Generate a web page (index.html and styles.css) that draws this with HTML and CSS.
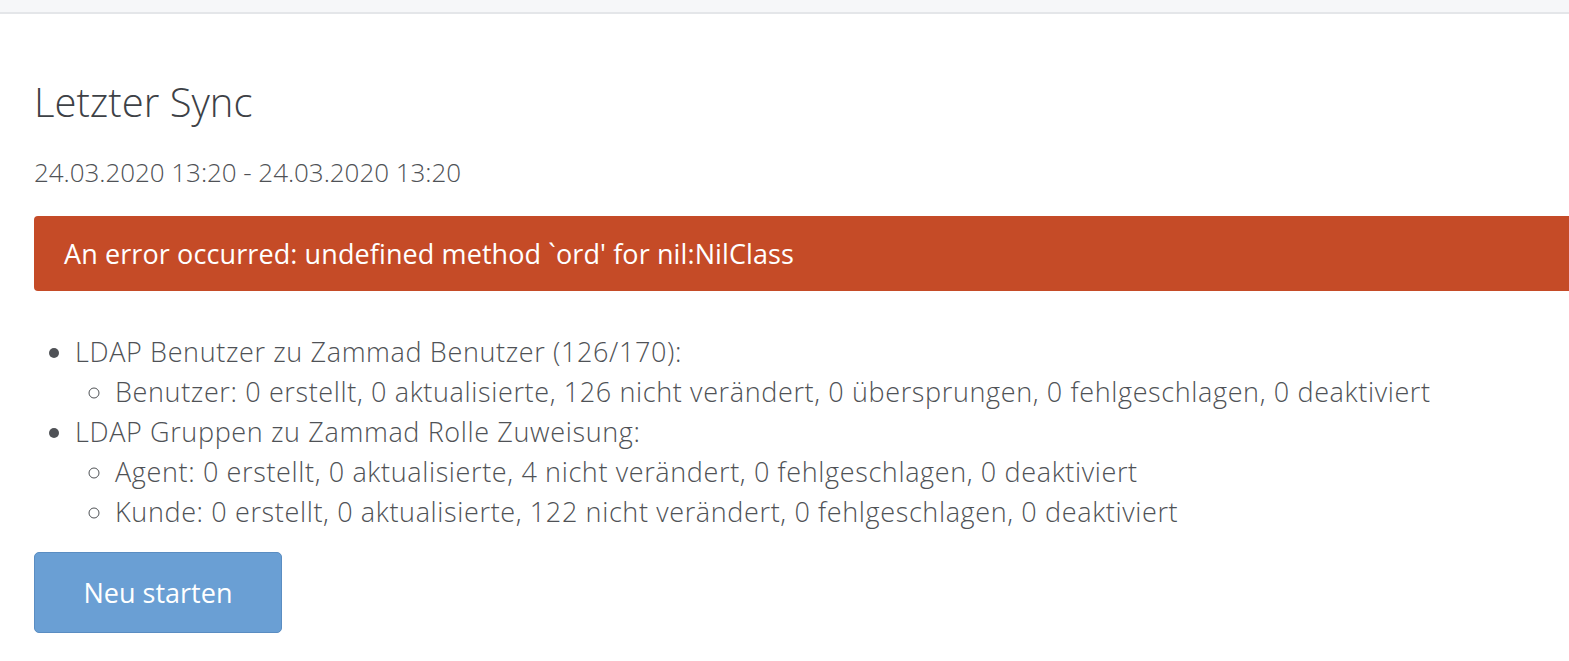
FILE: index.html
```html
<!DOCTYPE html>
<html lang="de">
<head>
<meta charset="utf-8">
<title>Letzter Sync</title>
<link rel="stylesheet" href="styles.css">
</head>
<body>
<div class="topbar"></div>
<main class="content">
  <h2 class="title">Letzter Sync</h2>
  <p class="range">24.03.2020 13:20 - 24.03.2020 13:20</p>
  <div class="alert">An error occurred: undefined method `ord' for nil:NilClass</div>
  <ul class="summary">
    <li>LDAP Benutzer zu Zammad Benutzer (126/170):
      <ul>
        <li>Benutzer: 0 erstellt, 0 aktualisierte, 126 nicht verändert, 0 übersprungen, 0 fehlgeschlagen, 0 deaktiviert</li>
      </ul>
    </li>
    <li>LDAP Gruppen zu Zammad Rolle Zuweisung:
      <ul>
        <li>Agent: 0 erstellt, 0 aktualisierte, 4 nicht verändert, 0 fehlgeschlagen, 0 deaktiviert</li>
        <li>Kunde: 0 erstellt, 0 aktualisierte, 122 nicht verändert, 0 fehlgeschlagen, 0 deaktiviert</li>
      </ul>
    </li>
  </ul>
  <button class="btn" type="button">Neu starten</button>
</main>
</body>
</html>
```

FILE: styles.css
```css
html, body {
  margin: 0;
  padding: 0;
  background: #fff;
  overflow: hidden;
}
body {
  font-family: "Open Sans", "Noto Sans", sans-serif;
  font-weight: 350;
  color: #4f5256;
  font-size: 27px;
  width: 1569px;
  height: 661px;
}
.topbar {
  height: 12px;
  background: #f6f7f9;
  border-bottom: 2px solid #e4e6e9;
}
.content {
  padding: 0 0 0 34px;
  margin-right: -20px;
  white-space: nowrap;
}
.title {
  margin: 62px 0 0;
  font-size: 40px;
  font-weight: 350;
  line-height: 52px;
  color: #3d4146;
}
.range {
  margin: 29px 0 0;
  line-height: 30px;
  font-size: 26px;
  letter-spacing: -0.05px;
}
.alert {
  margin-top: 29px;
  height: 75px;
  box-sizing: border-box;
  padding: 0 30px;
  display: flex;
  align-items: center;
  background: #c54b27;
  color: #fff;
  font-weight: 400;
  letter-spacing: 0.1px;
  border-radius: 4px 0 0 4px;
}
.summary {
  margin: 41px 0 0;
  padding-left: 41px;
  line-height: 40px;
  letter-spacing: 0.63px;
}
.summary ul {
  margin: 0;
  padding-left: 40px;
  list-style-type: circle;
}
.btn {
  margin-top: 20px;
  width: 248px;
  height: 81px;
  background: #6a9fd4;
  border: 1px solid #5a8dc2;
  border-radius: 5px;
  color: #fff;
  font-family: inherit;
  font-size: 27px;
  font-weight: 400;
}
```
